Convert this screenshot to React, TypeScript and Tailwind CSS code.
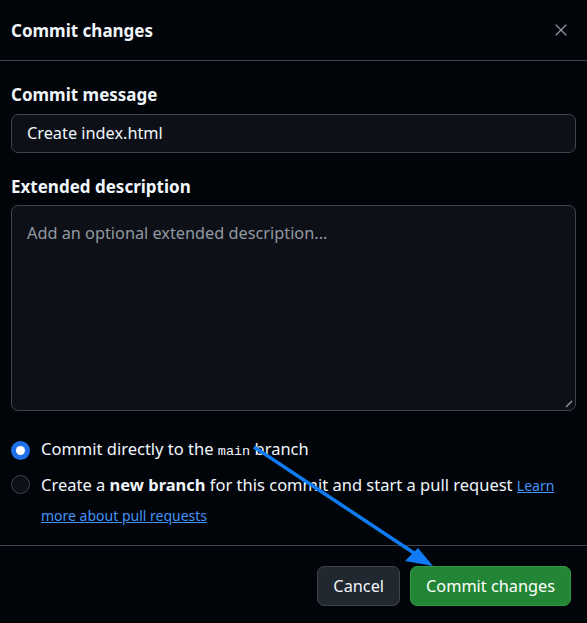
import { X } from "lucide-react";

export default function App() {
  return (
    <div className="relative h-[623px] w-[587px] overflow-hidden bg-[#010409] font-['Noto_Sans',sans-serif] text-[#f0f6fc]">
      <div className="flex h-full flex-col rounded-tr-xl">
        {/* Header */}
        <div className="flex h-[61px] items-center justify-between border-b border-[#3d444d] pl-[11px] pr-[16px]">
          <h1 className="mt-[2px] text-[17px] font-bold">Commit changes</h1>
          <X className="h-[20px] w-[20px] text-[#9198a1]" strokeWidth={1.4} />
        </div>

        {/* Body */}
        <div className="flex flex-col px-[11px] pt-[21px]">
          <label className="text-[17px] font-bold leading-[26px]">Commit message</label>
          <div className="mt-[6px] flex h-[39px] items-center rounded-[7px] border border-[#3d444d] bg-[#0d1117] px-[15px] text-[16.3px]">
            Create index.html
          </div>

          <label className="mt-[21px] text-[17px] font-bold leading-[26px]">Extended description</label>
          <div className="relative mt-[5px] h-[206px] rounded-[7px] border border-[#3d444d] bg-[#0d1117] px-[15px] pt-[15px] text-[16.3px] text-[#9198a1]">
            Add an optional extended description...
            <svg className="absolute bottom-[2px] right-[2px]" width="8" height="8" viewBox="0 0 8 8">
              <line x1="1" y1="7" x2="7" y2="1" stroke="#9198a1" strokeWidth="1.5" />
            </svg>
          </div>

          {/* Options */}
          <div className="mt-[23px] flex items-center gap-[11px] text-[16.5px] leading-[29px]">
            <span className="flex h-[19px] w-[19px] shrink-0 items-center justify-center rounded-full bg-[#1f6feb]">
              <span className="h-[9px] w-[9px] rounded-full bg-white" />
            </span>
            <span>
              Commit directly to the{" "}
              <code className="font-['Liberation_Mono',monospace] text-[13.5px]">main</code> branch
            </span>
          </div>
          <div className="mt-[4px] flex items-start gap-[11px] text-[16.5px] leading-[29px]">
            <span className="mt-[5px] h-[19px] w-[19px] shrink-0 rounded-full border border-[#3d444d] bg-[#0d1117]" />
            <span>
              Create a <b className="font-bold">new branch</b> for this commit and start a pull request{" "}
              <a className="text-[14px] text-[#4493f8] underline">Learn more about pull requests</a>
            </span>
          </div>
        </div>

        {/* Footer */}
        <div className="mt-auto flex h-[78px] items-center justify-end gap-[10px] border-t border-[#3d444d] pr-[16px]">
          <button className="mt-[3px] h-[40px] rounded-[7px] border border-[#3d444d] bg-[#212830] px-[15px] text-[16.3px]">
            Cancel
          </button>
          <button className="mt-[3px] h-[40px] rounded-[7px] border border-[#2e9a40] bg-[#238636] px-[15px] text-[16.3px] text-white">
            Commit changes
          </button>
        </div>
      </div>

      {/* annotation arrow */}
      <svg className="pointer-events-none absolute left-0 top-0" width="587" height="623">
        <line x1="254" y1="447" x2="420" y2="557" stroke="#0f7cf5" strokeWidth="3.5" />
        <polygon points="433,566 405,561 418,548" fill="#0f7cf5" />
      </svg>
    </div>
  );
}
